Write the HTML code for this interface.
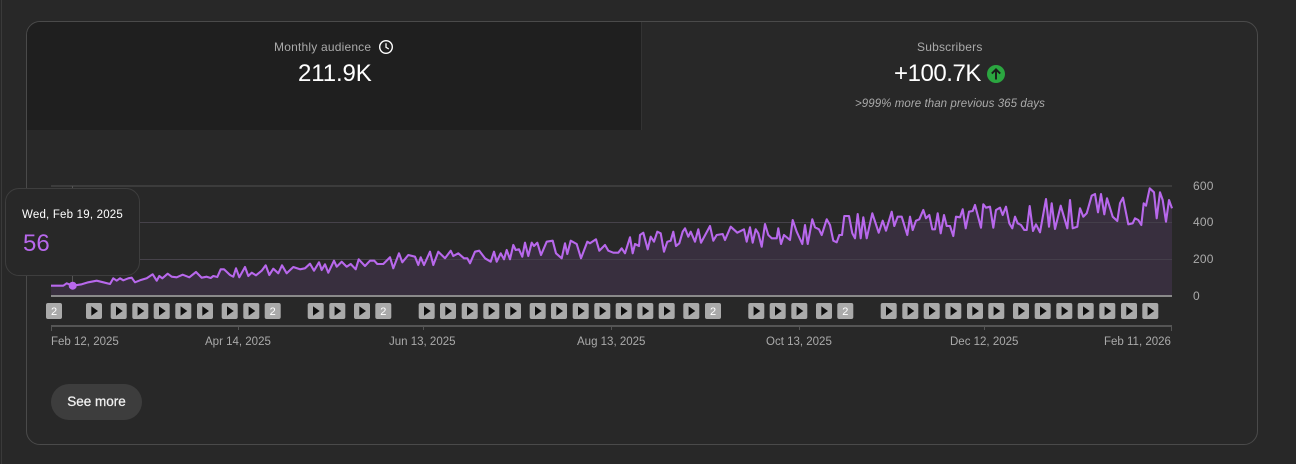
<!DOCTYPE html>
<html><head><meta charset="utf-8"><style>
html,body{margin:0;padding:0;background:#282828;width:1296px;height:464px;overflow:hidden}
*{box-sizing:border-box}
body{font-family:"Liberation Sans",sans-serif;position:relative}
.a{position:absolute;white-space:nowrap}
.card{left:26px;top:21px;width:1232px;height:424px;border:1px solid #4a4a4a;border-radius:14px}
.tile{left:27px;top:22px;width:615px;height:108px;background:#1f1f1f;border-top-left-radius:13px;border-right:1px solid #333}
.lb{font-size:12px;line-height:14px;color:#aaa;letter-spacing:.2px}
.dt{font-size:11.5px;line-height:14px;color:#aaa}
.big{font-size:24px;line-height:28px;color:#fff}
.tip{left:5px;top:188px;width:135px;height:88px;background:#282828;border:1px solid #3e3e3e;border-radius:14px}
.btn{left:51px;top:384px;width:91px;height:36px;border-radius:18px;background:#3d3d3d;color:#f1f1f1;font-size:13.5px;-webkit-text-stroke:.25px #f1f1f1;line-height:36px;text-align:center}
svg{position:absolute;left:0;top:0}
</style></head><body>
<div class="a" style="left:1px;top:0;width:1px;height:464px;background:#3a3a3a"></div>
<div class="a card"></div>
<div class="a tile"></div>
<div class="a lb" style="left:274px;top:40px">Monthly audience</div>
<svg width="1296" height="464" style="z-index:1">
<circle cx="386" cy="47" r="6.3" fill="none" stroke="#fff" stroke-width="1.4"/>
<path d="M386 43.2V47.3L388.8 49" fill="none" stroke="#fff" stroke-width="1.3"/>
<circle cx="996" cy="74" r="9" fill="#2ba640"/>
<path d="M996 79.5V69.5M991.8 73.6L996 69.4L1000.2 73.6" fill="none" stroke="#1a1a1a" stroke-width="1.9"/>
</svg>
<div class="a big" style="left:298px;top:60px;letter-spacing:-.1px">211.9K</div>
<div class="a lb" style="left:917px;top:40px">Subscribers</div>
<div class="a big" style="left:894px;top:60px;letter-spacing:-.45px">+100.7K</div>
<div class="a" style="left:855px;top:97px;font-size:11.5px;line-height:14px;font-style:italic;color:#aaa;letter-spacing:.07px">&gt;999% more than previous 365 days</div>

<svg width="1296" height="464">
<rect x="51" y="185" width="1121" height="2" fill="#3c3c3c"/>
<rect x="51" y="222" width="1121" height="1" fill="#3c3c3c"/>
<rect x="51" y="259" width="1121" height="1" fill="#3c3c3c"/>
<rect x="72" y="186" width="1" height="110" fill="#555"/>
<path fill="#382f3e" d="M51 296V285.7 L63.3,285.7 66.7,283.3 72.7,285.7 81.7,284.3 88.3,282.3 96.7,280.7 103.3,282.3 110,284 113.3,278.3 116.7,280.7 120,278.3 123.3,280.3 128.3,278.3 131.7,277.7 135,282.3 140,280.3 146.7,278.3 152.7,274.3 156.7,280.7 159.3,276 162.3,278.3 167.7,273.7 171.7,276.7 176.7,277.3 182.7,274.7 189.3,277.3 196,272 201.7,277.7 206.7,276.7 210.7,278 213.3,276 217.3,277 220.7,269.3 224,269.3 230,275 233.3,276.7 236,268.3 239.3,277.3 245,267 248.3,276 251.7,272.7 256,275.3 261.7,270.7 265.7,265.3 269.3,275 273.3,268.7 278.3,273.3 282,265.3 286.7,273.3 293.3,267 300,269.3 305,268.3 310,263.7 314,270.7 319,262.3 320,265 321.7,270 325,264.3 328.3,272.7 334,260.7 336.7,266.7 341.7,261.7 346.7,266.7 350.7,264 355.7,269.3 358.7,259.3 365,266 370,260.7 374.3,260.7 377.3,264 383.3,264 390,257.3 393.3,268.3 399,253.3 402.3,262.3 408.3,255 415,256.7 418.3,265 420.7,257.3 424,265 430,251.7 433.3,265 438.3,251.7 445,258.3 450.7,250.7 453.3,256 458.3,253.3 464,258.3 467.3,258.3 470,263.3 475,251.7 479.3,250.7 485,258.3 490.7,261.7 494,251.7 496.7,261.7 500.7,253.3 504,259.3 506.7,250 510,259.3 513.3,245 515.7,250 519,249.3 522.3,256.7 525,242.7 528.3,256 531.7,242.7 534,246 537.3,242.7 541,255 546.7,241.7 552.7,240.7 556,253.3 561.7,258.3 565,243.3 567.3,254 570.7,240.7 576.7,244 581,258.3 587.3,241.7 590,243.3 596,239.3 599.3,250.7 605,245 608.3,250.7 613.3,252.7 618.3,252.7 621.7,248.3 625,253.3 630,237.3 632.7,253.3 635,244 639,246 640,235 643.3,232.7 647.7,249.3 650.7,236.7 654,241.7 657.3,231.7 660.7,233.3 664,251.7 667.3,241.7 670.7,240.7 673.3,231.7 676,246 679.3,243.3 682.7,231.7 685,228.3 688.3,236.7 690.7,231.7 695,241.7 698.3,229.3 701,242.7 710,226 713.3,240.7 716.7,235 722.7,234 725,240 730.7,226.7 737.3,232.7 744,229.3 746.7,241.7 750,227.3 752.7,242.7 755.7,229.3 758.3,233.3 761.7,246.7 765,224 768.3,235 771.7,238.3 776.7,238.3 778.3,228.3 781,244 784,235 790,240 792.7,220 796.7,231.7 802.3,244 805,225 807.7,244 812.3,219.3 815,227.3 819,229.3 821.7,235 826.7,219.3 830,225 833.3,240.7 836.7,242.3 839.3,235 842,235 844.3,216 849,216 852.3,233.3 855,238.3 857.7,214 860.7,238.3 863.3,217.3 866.7,238.3 872.3,213.3 878.7,232.7 882.7,220.7 886,230.7 891.7,211.7 894.3,226 897.7,216.7 901.7,216.7 907.3,235 910,216.7 912.7,230 916,220.7 919.3,219.3 923.3,210 926,218.3 929.3,215 932.3,229.3 935,229.3 937.7,213.3 940.7,233.3 944,215 946.7,226 950,226 953.3,236 956,216.7 960,217.3 962.7,209.3 965.7,228.3 969,211.7 972.7,211 975,205 981,227.7 983.3,204.3 986,207.7 990,206.7 993.3,227.7 996,210 1000,207.7 1002.7,215 1006,206.7 1009.3,223.3 1012.3,228.3 1015,216.7 1017.7,223.3 1021,225 1024.3,230 1026.7,230 1029.7,206 1033,231 1036,224.3 1040,232.3 1046,199 1049,226.7 1051.7,203.3 1055,229 1060.7,205.7 1067.3,228.3 1070,200 1072.7,228.3 1077.3,226.7 1080,208.3 1083.3,216.7 1086.7,213.3 1091.7,195.7 1095,194 1098,212.3 1101,194 1104.3,214.3 1107,198.3 1112.7,216.7 1117.3,221 1120,203.3 1123,197.7 1128.3,224.3 1132.7,223.3 1135,218.3 1138.3,220 1141.3,225 1143.7,203.3 1146,205.7 1149.7,188.3 1154,192.3 1156.7,218.3 1160,192.3 1162.7,200 1166,221.7 1169,200 1172,208.3 V296Z"/>
<rect x="51" y="222" width="1121" height="1" fill="#4a4550" opacity=".7"/>
<rect x="51" y="259" width="1121" height="1" fill="#4a4550" opacity=".7"/>
<polyline fill="none" stroke="#b868ec" stroke-width="2.1" stroke-linejoin="round" points="51,285.7 63.3,285.7 66.7,283.3 72.7,285.7 81.7,284.3 88.3,282.3 96.7,280.7 103.3,282.3 110,284 113.3,278.3 116.7,280.7 120,278.3 123.3,280.3 128.3,278.3 131.7,277.7 135,282.3 140,280.3 146.7,278.3 152.7,274.3 156.7,280.7 159.3,276 162.3,278.3 167.7,273.7 171.7,276.7 176.7,277.3 182.7,274.7 189.3,277.3 196,272 201.7,277.7 206.7,276.7 210.7,278 213.3,276 217.3,277 220.7,269.3 224,269.3 230,275 233.3,276.7 236,268.3 239.3,277.3 245,267 248.3,276 251.7,272.7 256,275.3 261.7,270.7 265.7,265.3 269.3,275 273.3,268.7 278.3,273.3 282,265.3 286.7,273.3 293.3,267 300,269.3 305,268.3 310,263.7 314,270.7 319,262.3 320,265 321.7,270 325,264.3 328.3,272.7 334,260.7 336.7,266.7 341.7,261.7 346.7,266.7 350.7,264 355.7,269.3 358.7,259.3 365,266 370,260.7 374.3,260.7 377.3,264 383.3,264 390,257.3 393.3,268.3 399,253.3 402.3,262.3 408.3,255 415,256.7 418.3,265 420.7,257.3 424,265 430,251.7 433.3,265 438.3,251.7 445,258.3 450.7,250.7 453.3,256 458.3,253.3 464,258.3 467.3,258.3 470,263.3 475,251.7 479.3,250.7 485,258.3 490.7,261.7 494,251.7 496.7,261.7 500.7,253.3 504,259.3 506.7,250 510,259.3 513.3,245 515.7,250 519,249.3 522.3,256.7 525,242.7 528.3,256 531.7,242.7 534,246 537.3,242.7 541,255 546.7,241.7 552.7,240.7 556,253.3 561.7,258.3 565,243.3 567.3,254 570.7,240.7 576.7,244 581,258.3 587.3,241.7 590,243.3 596,239.3 599.3,250.7 605,245 608.3,250.7 613.3,252.7 618.3,252.7 621.7,248.3 625,253.3 630,237.3 632.7,253.3 635,244 639,246 640,235 643.3,232.7 647.7,249.3 650.7,236.7 654,241.7 657.3,231.7 660.7,233.3 664,251.7 667.3,241.7 670.7,240.7 673.3,231.7 676,246 679.3,243.3 682.7,231.7 685,228.3 688.3,236.7 690.7,231.7 695,241.7 698.3,229.3 701,242.7 710,226 713.3,240.7 716.7,235 722.7,234 725,240 730.7,226.7 737.3,232.7 744,229.3 746.7,241.7 750,227.3 752.7,242.7 755.7,229.3 758.3,233.3 761.7,246.7 765,224 768.3,235 771.7,238.3 776.7,238.3 778.3,228.3 781,244 784,235 790,240 792.7,220 796.7,231.7 802.3,244 805,225 807.7,244 812.3,219.3 815,227.3 819,229.3 821.7,235 826.7,219.3 830,225 833.3,240.7 836.7,242.3 839.3,235 842,235 844.3,216 849,216 852.3,233.3 855,238.3 857.7,214 860.7,238.3 863.3,217.3 866.7,238.3 872.3,213.3 878.7,232.7 882.7,220.7 886,230.7 891.7,211.7 894.3,226 897.7,216.7 901.7,216.7 907.3,235 910,216.7 912.7,230 916,220.7 919.3,219.3 923.3,210 926,218.3 929.3,215 932.3,229.3 935,229.3 937.7,213.3 940.7,233.3 944,215 946.7,226 950,226 953.3,236 956,216.7 960,217.3 962.7,209.3 965.7,228.3 969,211.7 972.7,211 975,205 981,227.7 983.3,204.3 986,207.7 990,206.7 993.3,227.7 996,210 1000,207.7 1002.7,215 1006,206.7 1009.3,223.3 1012.3,228.3 1015,216.7 1017.7,223.3 1021,225 1024.3,230 1026.7,230 1029.7,206 1033,231 1036,224.3 1040,232.3 1046,199 1049,226.7 1051.7,203.3 1055,229 1060.7,205.7 1067.3,228.3 1070,200 1072.7,228.3 1077.3,226.7 1080,208.3 1083.3,216.7 1086.7,213.3 1091.7,195.7 1095,194 1098,212.3 1101,194 1104.3,214.3 1107,198.3 1112.7,216.7 1117.3,221 1120,203.3 1123,197.7 1128.3,224.3 1132.7,223.3 1135,218.3 1138.3,220 1141.3,225 1143.7,203.3 1146,205.7 1149.7,188.3 1154,192.3 1156.7,218.3 1160,192.3 1162.7,200 1166,221.7 1169,200 1172,208.3"/>
<circle cx="72.7" cy="285.7" r="4" fill="#b868ec"/>
<rect x="51" y="295" width="1121" height="2" fill="#8a8a8a"/>
<rect x="51" y="325" width="1121" height="2" fill="#555"/>
<g fill="#555">
<rect x="51" y="326" width="1" height="5"/><rect x="238" y="326" width="1" height="4"/><rect x="423" y="326" width="1" height="4"/><rect x="611" y="326" width="1" height="4"/><rect x="799" y="326" width="1" height="4"/><rect x="984" y="326" width="1" height="4"/><rect x="1171" y="326" width="1" height="5"/>
</g>
<defs>
<g id="p"><rect width="16" height="16" rx="2" fill="#aaa"/><path d="M5.3 3.3L12 8L5.3 12.7Z" fill="#0f0f0f"/></g>
<g id="t"><rect width="16" height="16" rx="2" fill="#aaa"/></g>
</defs>
<g>
<use href="#t" x="46" y="303"/><use href="#p" x="86" y="303"/><use href="#p" x="110.7" y="303"/><use href="#p" x="132.3" y="303"/><use href="#p" x="153.7" y="303"/><use href="#p" x="175.3" y="303"/><use href="#p" x="197" y="303"/><use href="#p" x="221.7" y="303"/><use href="#p" x="243.3" y="303"/><use href="#t" x="264.7" y="303"/>
<use href="#p" x="307.7" y="303"/><use href="#p" x="329.3" y="303"/><use href="#p" x="354" y="303"/><use href="#t" x="375.3" y="303"/>
<use href="#p" x="418.7" y="303"/><use href="#p" x="440" y="303"/><use href="#p" x="461.7" y="303"/><use href="#p" x="483.3" y="303"/><use href="#p" x="505" y="303"/><use href="#p" x="529.7" y="303"/><use href="#p" x="551" y="303"/><use href="#p" x="572.7" y="303"/><use href="#p" x="594.3" y="303"/><use href="#p" x="615.7" y="303"/><use href="#p" x="637.3" y="303"/><use href="#p" x="658.7" y="303"/><use href="#p" x="683.3" y="303"/><use href="#t" x="705" y="303"/>
<use href="#p" x="748.3" y="303"/><use href="#p" x="769.7" y="303"/><use href="#p" x="791.3" y="303"/><use href="#p" x="816" y="303"/><use href="#t" x="837.3" y="303"/>
<use href="#p" x="880.7" y="303"/><use href="#p" x="902.3" y="303"/><use href="#p" x="923.7" y="303"/><use href="#p" x="945.3" y="303"/><use href="#p" x="967" y="303"/><use href="#p" x="988.3" y="303"/><use href="#p" x="1013" y="303"/><use href="#p" x="1034.7" y="303"/><use href="#p" x="1056.3" y="303"/><use href="#p" x="1077.7" y="303"/><use href="#p" x="1099.3" y="303"/><use href="#p" x="1121" y="303"/><use href="#p" x="1142.3" y="303"/>
</g>
<g font-family="Liberation Sans, sans-serif" font-size="11" fill="#fff" text-anchor="middle">
<text x="54" y="315">2</text><text x="272.7" y="315">2</text><text x="383.3" y="315">2</text><text x="713" y="315">2</text><text x="845.3" y="315">2</text>
</g>
</svg>

<div class="a lb" style="left:1193px;top:179px">600</div>
<div class="a lb" style="left:1193px;top:215px">400</div>
<div class="a lb" style="left:1193px;top:252px">200</div>
<div class="a lb" style="left:1193px;top:289px">0</div>

<div class="a dt" style="left:51px;top:335px">Feb 12, 2025</div>
<div class="a dt" style="left:205px;top:335px">Apr 14, 2025</div>
<div class="a dt" style="left:389px;top:335px">Jun 13, 2025</div>
<div class="a dt" style="left:577px;top:335px">Aug 13, 2025</div>
<div class="a dt" style="left:766px;top:335px">Oct 13, 2025</div>
<div class="a dt" style="left:950px;top:335px">Dec 12, 2025</div>
<div class="a dt" style="left:1104px;top:335px">Feb 11, 2026</div>

<div class="a tip"></div>
<div class="a" style="left:22px;top:208px;font-size:11.5px;line-height:14px;color:#fff;letter-spacing:.2px">Wed, Feb 19, 2025</div>
<div class="a" style="left:23px;top:230px;font-size:24px;line-height:28px;color:#b868ec">56</div>

<div class="a btn">See more</div>
</body></html>
